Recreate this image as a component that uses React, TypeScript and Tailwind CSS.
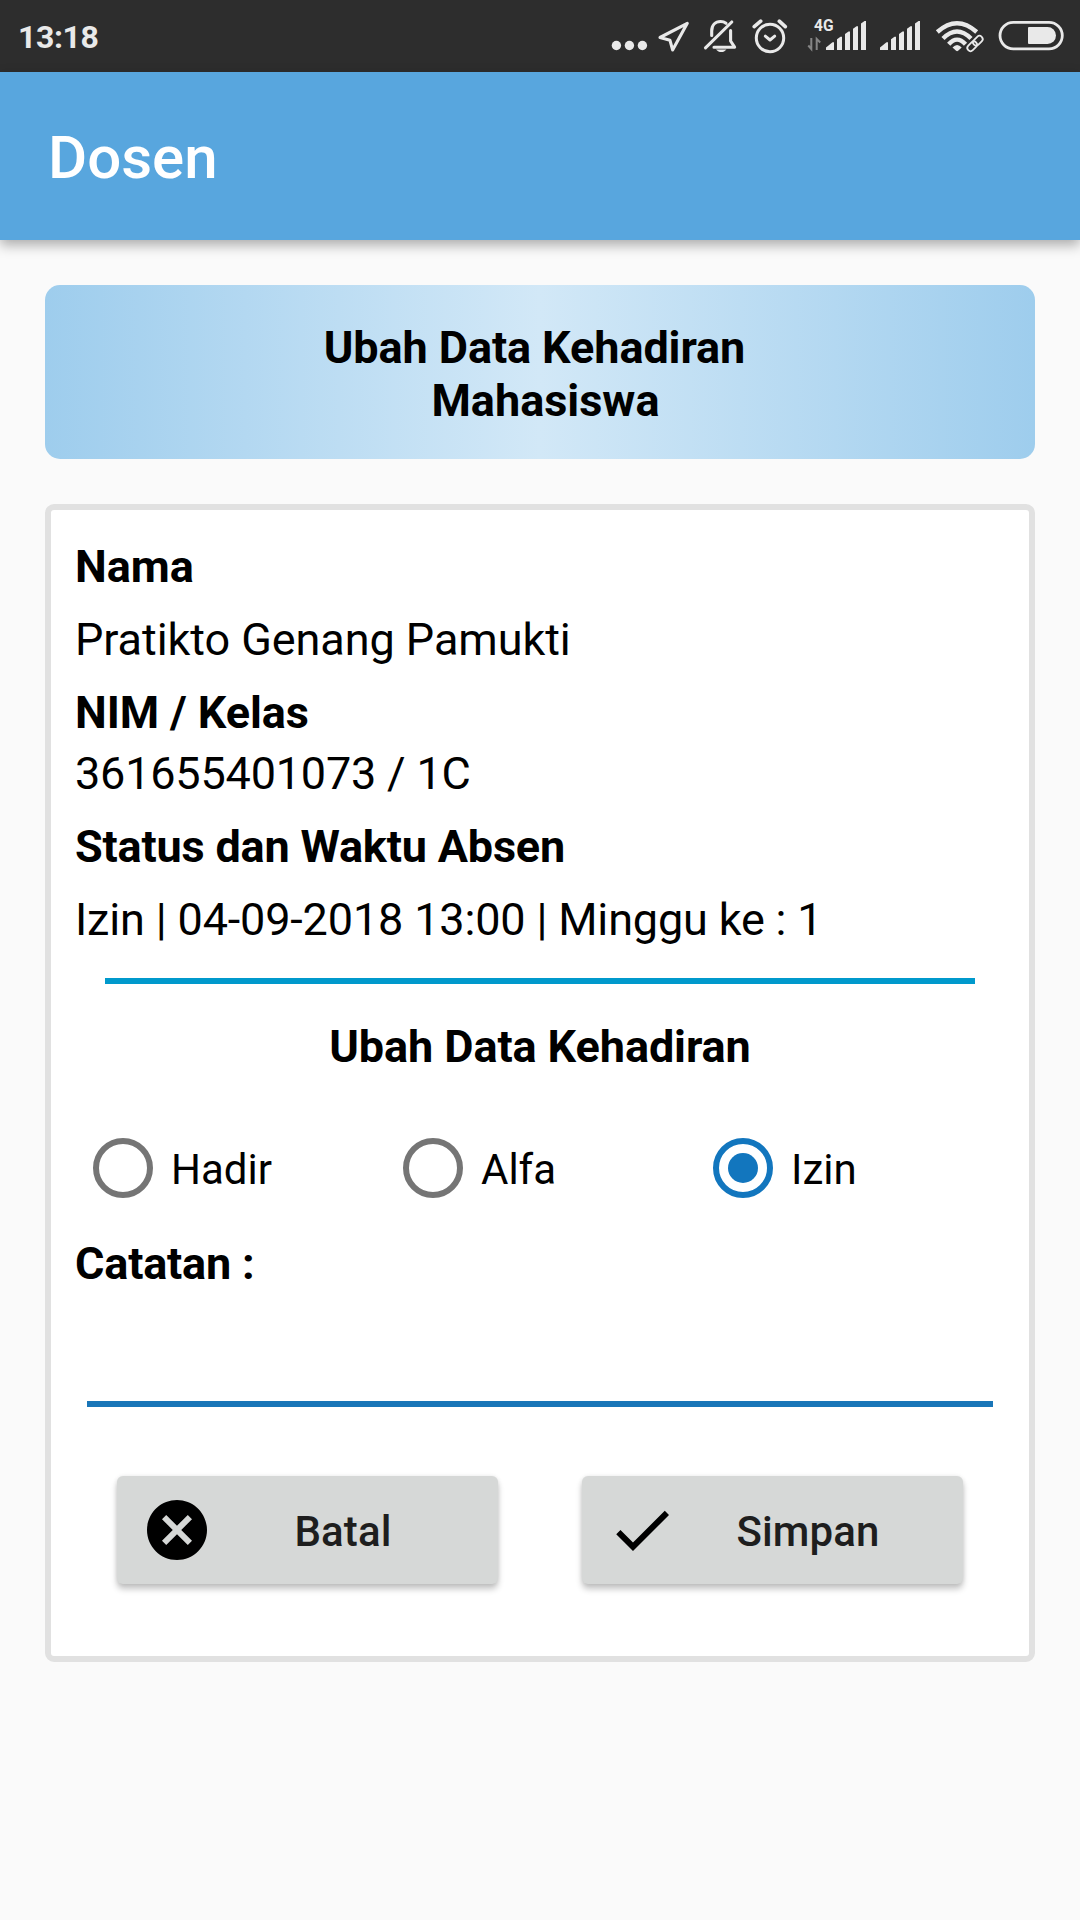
import type { ReactNode } from "react";
import { MdCancel, MdCheck } from "react-icons/md";

const INK = "#e9e9e9";

function Glyph({ x, w, children }: { x: number; w: number; children: ReactNode }) {
  return (
    <svg width={w} height={72} viewBox={`${x} 0 ${w} 72`} fill="none" className="shrink-0">
      {children}
    </svg>
  );
}

function Bars({ x }: { x: number }) {
  return (
    <g fill={INK}>
      <path d={`M${x} 50v-2.600l6.500-5.200h1.500V50z`} />
      <path d={`M${x + 11} 50V39.200l3.500-2.400h1.500V50z`} />
      <path d={`M${x + 19} 50V34l3.500-2.400h1.500V50z`} />
      <path d={`M${x + 27} 50V28.700l3.500-2.400h1.500V50z`} />
      <path d={`M${x + 35} 50V23.400l3.500-2.400h1.500V50z`} />
    </g>
  );
}

function StatusBar() {
  return (
    <div className="flex h-[72px] items-center justify-between bg-[#2d2d2d] pl-[18px]">
      <span className="pt-[2px] text-[32px] leading-[38px] font-bold tracking-[-0.4px] text-[#e9e9e9]">13:18</span>
      <div className="flex">
        <Glyph x={600} w={52}>
          <g fill={INK}>
            <circle cx="616.4" cy="45.5" r="4.7" />
            <circle cx="629.4" cy="45.5" r="4.7" />
            <circle cx="642.4" cy="45.5" r="4.7" />
          </g>
        </Glyph>
        <Glyph x={652} w={46}>
          <path d="M687.3 23.3 660 37.5l10 2.8 2.6 9.6z" stroke={INK} strokeWidth="3.1" strokeLinejoin="round" />
        </Glyph>
        <Glyph x={698} w={48}>
          <g stroke={INK} strokeWidth="3.1" strokeLinecap="round" strokeLinejoin="round">
            <path d="M705.5 47.8 731.8 22" />
            <path d="M711.7 35.5V31c0-6 3.7-9.5 8.8-9.5 2.2 0 4 .6 5.500 1.8" />
            <path d="M730.6 30.5V41l4 6.2H714" />
          </g>
          <path d="M716 49.5h10.5c-1.5 1.7-3.200 2.600-5.200 2.600s-3.900-.9-5.300-2.600z" fill={INK} />
        </Glyph>
        <Glyph x={746} w={54}>
          <g stroke={INK} strokeWidth="3" strokeLinecap="round" strokeLinejoin="round">
            <circle cx="770" cy="38" r="13.7" />
            <path d="M765.3 36.2 770 40l4.700-3.800" />
            <path d="M754.2 26.7 760.7 21.2M779.3 21.2 785.3 26.7" strokeWidth="3.6" />
          </g>
        </Glyph>
        <Glyph x={800} w={72}>
          <text
            x="814"
            y="31.3"
            fontSize="17"
            fontWeight="700"
            fill={INK}
            fontFamily="Roboto"
            textLength="19.5"
            lengthAdjust="spacingAndGlyphs"
          >
            4G
          </text>
          <path d="M811.3 38v11l-3-3.5M816.7 50V39l3.5 3.5" stroke="#858585" strokeWidth="2" />
          <Bars x={826} />
        </Glyph>
        <Glyph x={872} w={56}>
          <Bars x={880} />
        </Glyph>
        <Glyph x={928} w={62}>
          <g stroke={INK} strokeWidth="4.4">
            <path d="M937.3 32Q957 14.500 976.700 32" />
            <path d="M943 38.500Q957 24.500 971 38.500" />
            <path d="M948.700 44.200Q957 35 965.500 44.200" />
          </g>
          <path d="M952.500 47.500q4.600-5 9.200 0l-3.600 3.300q-1 .8-2 0z" fill={INK} />
          <g transform="rotate(-45 975 43.5)">
            <rect x="965" y="39" width="20" height="9" rx="4.5" fill="#2d2d2d" />
            <g stroke={INK} strokeWidth="1.8">
              <rect x="965.5" y="40.300" width="11" height="6.400" rx="3.200" />
              <rect x="973.5" y="40.300" width="11" height="6.400" rx="3.200" />
            </g>
          </g>
        </Glyph>
        <Glyph x={990} w={90}>
          <rect x="1000" y="22.3" width="62.300" height="26.600" rx="13.300" stroke={INK} strokeWidth="2.800" />
          <path d="M1029 27h18.500a8.500 8.500 0 0 1 0 17H1029q-1 0-1-1V28q0-1 1-1z" fill={INK} />
        </Glyph>
      </div>
    </div>
  );
}

function Radio({ label, checked = false }: { label: string; checked?: boolean }) {
  return (
    <label className="flex h-[60px] w-[310px] shrink-0 items-center">
      <span
        className={
          checked
            ? "flex size-[60px] items-center justify-center rounded-full border-[6px] border-[#1276be]"
            : "size-[60px] rounded-full border-[6px] border-[#757575]"
        }
      >
        {checked && <span className="size-[30px] rounded-full bg-[#1276be]" />}
      </span>
      <span className="ml-[18px] pt-[3px] text-[42px] leading-[49px]">{label}</span>
    </label>
  );
}

function ActionButton({ icon, label }: { icon: ReactNode; label: string }) {
  return (
    <button className="flex h-[108px] w-[381px] items-center rounded-[6px] bg-[#d6d8d7] pr-[25px] pl-6 shadow-[0_5px_6px_rgba(0,0,0,0.23),0_0_4px_rgba(0,0,0,0.08)]">
      {icon}
      <span className="flex-1 pt-[3px] text-center text-[42px] leading-[49px] font-medium tracking-[0.1px] text-[#1e1e1e]">
        {label}
      </span>
    </button>
  );
}

export default function App() {
  return (
    <div className="min-h-[1920px] w-[1080px] bg-[#fafafa] font-['Roboto',sans-serif] text-[45px] leading-[53px] text-black">
      <StatusBar />
      <header className="flex h-[168px] items-center bg-[#58a6de] pl-12 shadow-[0_5px_12px_rgba(0,0,0,0.32)]">
        <h1 className="mt-1 text-[60px] leading-[70px] font-medium text-white">Dosen</h1>
      </header>

      <main className="px-[45px] pt-[45px]">
        <h2 className="flex h-[174px] flex-col items-center rounded-[15px] bg-linear-to-r/srgb from-[#9ecded] via-[#d2e8f7] to-[#9ecded] pt-9 font-bold">
          <span className="pr-[11px] tracking-[-0.09px]">Ubah Data Kehadiran</span>
          <span className="pl-[11px]">Mahasiswa</span>
        </h2>

        <section className="mt-[45px] h-[1158px] rounded-[9px] border-[6px] border-[#e1e1e1] bg-white px-6 pt-[30px]">
          <div className="font-bold">Nama</div>
          <div className="mt-5 tracking-[-0.07px]">Pratikto Genang Pamukti</div>
          <div className="mt-5 font-bold tracking-[-0.1px]">NIM / Kelas</div>
          <div className="mt-2 tracking-[-0.2px]">361655401073 / 1C</div>
          <div className="mt-5 font-bold tracking-[-0.19px]">Status dan Waktu Absen</div>
          <div className="mt-5 tracking-[-0.16px]">Izin | 04-09-2018 13:00 | Minggu ke : 1</div>
          <div className="mx-[30px] mt-8 h-[6px] bg-[#0099cc]" />
          <h3 className="mt-9 text-center font-bold tracking-[-0.09px]">Ubah Data Kehadiran</h3>

          <div className="mt-[65px] flex pl-[18px]">
            <Radio label="Hadir" />
            <Radio label="Alfa" />
            <Radio label="Izin" checked />
          </div>

          <div className="mt-[39px] font-bold tracking-[-0.2px]">Catatan :</div>
          <div className="mx-3 mt-[111px] h-[6px] bg-[#1976b8]" />

          <div className="mt-[69px] flex gap-[84px] pl-[42px]">
            <ActionButton label="Batal" icon={<MdCancel className="size-[72px] shrink-0 text-black" />} />
            <ActionButton label="Simpan" icon={<MdCheck className="size-[72px] shrink-0 text-black" />} />
          </div>
        </section>
      </main>
    </div>
  );
}
